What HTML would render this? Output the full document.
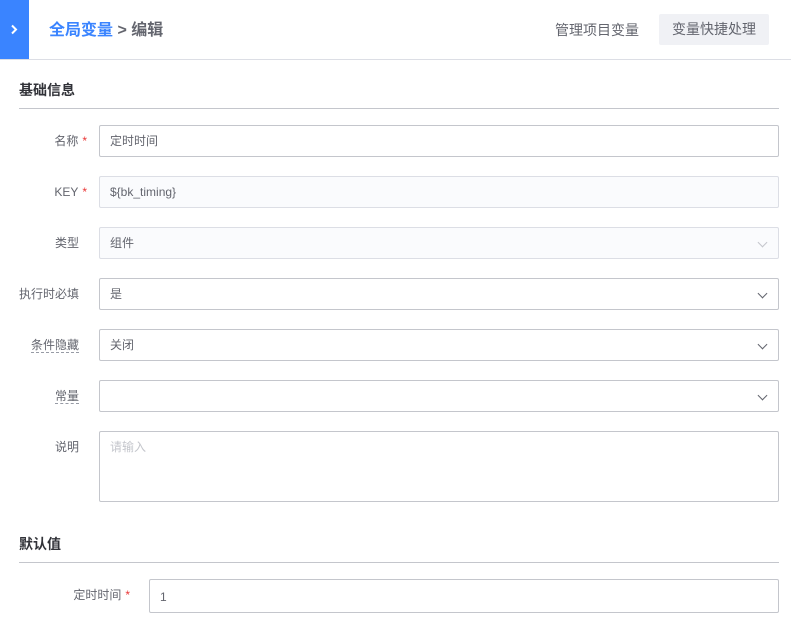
<!DOCTYPE html><html><head><meta charset="utf-8"><style>
*{box-sizing:border-box;margin:0;padding:0}
body{width:791px;height:626px;background:#fff;font-family:"Liberation Sans","Noto Sans CJK SC",sans-serif;font-size:13px;color:#63656e;position:relative;overflow:hidden}
.a{position:absolute}
.side{left:0;top:0;width:29px;height:59px;background:#3a84ff;color:#fff}
.hdr{left:0;top:59px;width:791px;height:1px;background:#dcdee5}
.inp{position:absolute;left:99px;width:680px;height:32px;border:1px solid #c4c6cc;border-radius:2px;padding:0 10px;line-height:31px;color:#63656e;font-size:12px}
.dis{background:#fafbfd;border-color:#dcdee5}
.lbl{position:absolute;width:79px;text-align:right;line-height:32px;color:#63656e;font-size:12px}
.st{color:#ea3636;margin-left:4px}
.dash{border-bottom:1px dashed #979ba5;line-height:18px}
.chev{position:absolute;right:12px;top:11px;width:7px;height:7px;border-right:1.2px solid #63656e;border-bottom:1.2px solid #63656e;transform:rotate(45deg)}
.sec{position:absolute;left:19px;font-weight:bold;color:#313238;font-size:14px}
.line{position:absolute;left:19px;width:760px;height:1px;background:#c4c6cc}
</style></head><body>
<div class="a side"><svg width="29" height="59"><path d="M12 25.5 L16 29.5 L12 33.5" stroke="#fff" stroke-width="2" fill="none"/></svg></div>
<div class="a hdr"></div>
<div class="a" style="left:49px;top:20px;font-size:16px;font-weight:bold;line-height:22px"><span style="color:#3a84ff">全局变量</span> <span style="color:#63656e">&gt; 编辑</span></div>
<div class="a" style="left:555px;top:20px;line-height:20px;font-size:14px">管理项目变量</div>
<div class="a" style="left:659px;top:14px;width:110px;height:31px;background:#f0f1f5;border-radius:2px;text-align:center;line-height:31px;font-size:14px">变量快捷处理</div>
<div class="sec" style="top:80px">基础信息</div><div class="line" style="top:108px"></div>
<div class="lbl" style="top:125px;width:87px">名称<span class="st">*</span></div><div class="inp" style="top:125px">定时时间</div>
<div class="lbl" style="top:176px;width:87px">KEY<span class="st">*</span></div><div class="inp dis" style="top:176px">${bk_timing}</div>
<div class="lbl" style="top:227px">类型</div><div class="inp dis" style="top:227px">组件<i class="chev" style="border-color:#c4c6cc"></i></div>
<div class="lbl" style="top:278px">执行时必填</div><div class="inp" style="top:278px">是<i class="chev"></i></div>
<div class="lbl" style="top:329px"><span class="dash">条件隐藏</span></div><div class="inp" style="top:329px">关闭<i class="chev"></i></div>
<div class="lbl" style="top:380px"><span class="dash">常量</span></div><div class="inp" style="top:380px"><i class="chev"></i></div>
<div class="lbl" style="top:431px">说明</div><div class="inp" style="top:431px;height:71px;color:#c4c6cc">请输入</div>
<div class="sec" style="top:534px">默认值</div><div class="line" style="top:562px"></div>
<div class="lbl" style="top:579px;width:130px">定时时间<span class="st">*</span></div><div class="inp" style="top:579px;left:149px;width:630px;height:34px;line-height:34px">1</div>
</body></html>
